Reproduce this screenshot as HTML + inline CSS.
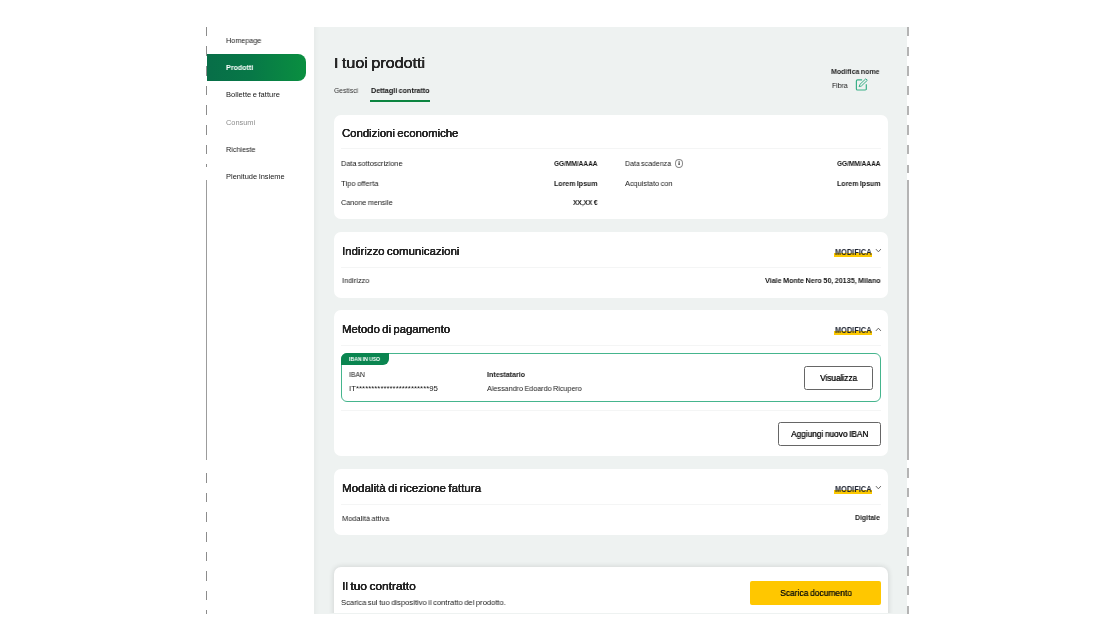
<!DOCTYPE html>
<html><head><meta charset="utf-8"><style>
*{margin:0;padding:0;box-sizing:border-box}
html,body{width:1113px;height:640px;overflow:hidden;background:#fff}
body{position:relative;font-family:"Liberation Sans",sans-serif;color:#2e2e2e}
.a{position:absolute;white-space:nowrap;will-change:transform}
.r{position:absolute}
.pill{left:207px;top:53.6px;width:99px;height:27.3px;border-radius:0 8px 8px 0;background:linear-gradient(90deg,#086e48 0%,#077847 45%,#0a8f40 100%)}
.panel{left:313.6px;top:27px;width:593.4px;height:586.5px;background:#eef2f1;box-shadow:inset 5px 0 4px -3px rgba(0,0,0,.035)}
.card{left:333.8px;width:554.2px;background:#fff;border-radius:7px}
.c5{border-radius:7px 7px 0 0;box-shadow:0 0 5px 1px rgba(0,0,0,.1)}
.hr{left:341px;width:540px;height:1px;background:#f4f5f5}
.btn{border:1px solid #666;border-radius:2.5px;background:#fff}
</style></head><body>
<div class="r" style="left:206px;top:26.5px;width:1.4px;height:9.8px;background:#8c8c8c"></div>
<div class="r" style="left:206px;top:46.2px;width:1.4px;height:9.8px;background:#8c8c8c"></div>
<div class="r" style="left:206px;top:65.9px;width:1.4px;height:9.8px;background:#8c8c8c"></div>
<div class="r" style="left:206px;top:85.6px;width:1.4px;height:9.8px;background:#8c8c8c"></div>
<div class="r" style="left:206px;top:105.3px;width:1.4px;height:9.8px;background:#8c8c8c"></div>
<div class="r" style="left:206px;top:125.0px;width:1.4px;height:9.8px;background:#8c8c8c"></div>
<div class="r" style="left:206px;top:144.7px;width:1.4px;height:9.8px;background:#8c8c8c"></div>
<div class="r" style="left:206px;top:164.4px;width:1.4px;height:3.1px;background:#8c8c8c"></div>
<div class="r" style="left:206px;top:180px;width:1.4px;height:280px;background:#9c9c9c"></div>
<div class="r" style="left:206px;top:473.3px;width:1.4px;height:9.6px;background:#8c8c8c"></div>
<div class="r" style="left:206px;top:492.9px;width:1.4px;height:9.6px;background:#8c8c8c"></div>
<div class="r" style="left:206px;top:512.4px;width:1.4px;height:9.6px;background:#8c8c8c"></div>
<div class="r" style="left:206px;top:532.0px;width:1.4px;height:9.6px;background:#8c8c8c"></div>
<div class="r" style="left:206px;top:551.5px;width:1.4px;height:9.6px;background:#8c8c8c"></div>
<div class="r" style="left:206px;top:571.0px;width:1.4px;height:9.6px;background:#8c8c8c"></div>
<div class="r" style="left:206px;top:590.6px;width:1.4px;height:9.6px;background:#8c8c8c"></div>
<div class="r" style="left:206px;top:610.1px;width:1.4px;height:4.1px;background:#8c8c8c"></div>
<div class="r" style="left:907px;top:27.0px;width:2px;height:9.4px;background:#b4b4b4"></div>
<div class="r" style="left:907px;top:46.6px;width:2px;height:9.4px;background:#b4b4b4"></div>
<div class="r" style="left:907px;top:66.3px;width:2px;height:9.4px;background:#b4b4b4"></div>
<div class="r" style="left:907px;top:85.9px;width:2px;height:9.4px;background:#b4b4b4"></div>
<div class="r" style="left:907px;top:105.6px;width:2px;height:9.4px;background:#b4b4b4"></div>
<div class="r" style="left:907px;top:125.2px;width:2px;height:9.4px;background:#b4b4b4"></div>
<div class="r" style="left:907px;top:144.9px;width:2px;height:9.4px;background:#b4b4b4"></div>
<div class="r" style="left:907px;top:164.5px;width:2px;height:8.3px;background:#b4b4b4"></div>
<div class="r" style="left:907px;top:180px;width:2px;height:280px;background:#b4b4b4"></div>
<div class="r" style="left:907px;top:468.4px;width:2px;height:9.4px;background:#b4b4b4"></div>
<div class="r" style="left:907px;top:488.0px;width:2px;height:9.4px;background:#b4b4b4"></div>
<div class="r" style="left:907px;top:507.6px;width:2px;height:9.4px;background:#b4b4b4"></div>
<div class="r" style="left:907px;top:527.2px;width:2px;height:9.4px;background:#b4b4b4"></div>
<div class="r" style="left:907px;top:546.8px;width:2px;height:9.4px;background:#b4b4b4"></div>
<div class="r" style="left:907px;top:566.4px;width:2px;height:9.4px;background:#b4b4b4"></div>
<div class="r" style="left:907px;top:586.0px;width:2px;height:9.4px;background:#b4b4b4"></div>
<div class="r" style="left:907px;top:605.6px;width:2px;height:8.2px;background:#b4b4b4"></div>
<div class="r pill"></div>
<div class="a" style="top:36px;font-size:7.4px;line-height:9px;color:#161616;word-spacing:-0.07em;left:226.00px;transform-origin:0 0;transform:scaleX(0.9779);">Homepage</div>
<div class="a" style="top:63px;font-size:7.4px;line-height:9px;color:#fff;word-spacing:-0.07em;font-weight:bold;left:226.00px;transform-origin:0 0;transform:scaleX(0.9660);">Prodotti</div>
<div class="a" style="top:90px;font-size:7.4px;line-height:9px;color:#161616;word-spacing:-0.07em;left:226.00px;transform-origin:0 0;transform:scaleX(1.0217);">Bollette e fatture</div>
<div class="a" style="top:118px;font-size:7.4px;line-height:9px;color:#8c8c8c;word-spacing:-0.07em;left:226.00px;transform-origin:0 0;transform:scaleX(0.9863);">Consumi</div>
<div class="a" style="top:145px;font-size:7.4px;line-height:9px;color:#161616;word-spacing:-0.07em;left:226.00px;transform-origin:0 0;transform:scaleX(0.9725);">Richieste</div>
<div class="a" style="top:172px;font-size:7.4px;line-height:9px;color:#161616;word-spacing:-0.07em;left:226.00px;transform-origin:0 0;transform:scaleX(1.0085);">Plenitude Insieme</div>
<div class="r panel"></div>
<div class="a" style="top:56px;font-size:13.8px;line-height:15px;color:#262626;word-spacing:-0.07em;text-shadow:0.18px 0 0 #262626,-0.11px 0 0 #262626,0 0.09px 0 #262626;left:334.10px;transform-origin:0 0;transform:scaleX(1.1715);">I tuoi prodotti</div>
<div class="a" style="top:86px;font-size:7.5px;line-height:9px;color:#333;word-spacing:-0.07em;left:333.70px;transform-origin:0 0;transform:scaleX(0.9036);">Gestisci</div>
<div class="a" style="top:86px;font-size:7.5px;line-height:9px;color:#111;word-spacing:-0.07em;font-weight:bold;left:370.70px;transform-origin:0 0;transform:scaleX(0.9519);">Dettagli contratto</div>
<div class="r" style="left:370px;top:100.4px;width:60px;height:2px;background:#0b8440"></div>
<div class="a" style="top:67px;font-size:7.7px;line-height:9px;color:#262626;word-spacing:-0.07em;font-weight:bold;left:831.45px;transform-origin:0 0;transform:scaleX(0.9097);">Modifica nome</div>
<div class="a" style="top:81px;font-size:7.9px;line-height:9px;color:#161616;word-spacing:-0.07em;left:831.50px;transform-origin:0 0;transform:scaleX(0.8720);">Fibra</div>
<svg class="r" style="left:852px;top:76px" width="18" height="18" viewBox="0 0 18 18"><path d="M10.1 3.8H5.5a1.1 1.1 0 0 0-1.1 1.1V12.9a1.1 1.1 0 0 0 1.1 1.1H13.2a1.1 1.1 0 0 0 1.1-1.1V8.3" fill="none" stroke="#3ab088" stroke-width="1.2"/><path d="M13.8 2.8L15.3 4.3 9.5 9.9 7.1 10.7 7.9 8.4Z" fill="none" stroke="#3ab088" stroke-width="1" stroke-linejoin="round"/></svg>
<div class="r card" style="top:115px;height:104px"></div>
<div class="a" style="top:127px;font-size:11px;line-height:12px;color:#262626;word-spacing:-0.07em;text-shadow:0.15px 0 0 #262626,-0.09px 0 0 #262626,0 0.07px 0 #262626;left:341.60px;transform-origin:0 0;transform:scaleX(1.0305);">Condizioni economiche</div>
<div class="r hr" style="top:148.3px"></div>
<div class="a" style="top:159px;font-size:7.8px;line-height:9px;color:#161616;word-spacing:-0.07em;left:341.30px;transform-origin:0 0;transform:scaleX(0.9349);">Data sottoscrizione</div>
<div class="a" style="top:179px;font-size:7.8px;line-height:9px;color:#161616;word-spacing:-0.07em;left:341.30px;transform-origin:0 0;transform:scaleX(0.9770);">Tipo offerta</div>
<div class="a" style="top:198px;font-size:7.8px;line-height:9px;color:#161616;word-spacing:-0.07em;left:341.30px;transform-origin:0 0;transform:scaleX(0.9261);">Canone mensile</div>
<div class="a" style="top:159px;font-size:7.5px;line-height:9px;color:#161616;word-spacing:-0.07em;font-weight:bold;left:553.70px;transform-origin:0 0;transform:scaleX(0.8701);">GG/MM/AAAA</div>
<div class="a" style="top:179px;font-size:7.5px;line-height:9px;color:#161616;word-spacing:-0.07em;font-weight:bold;left:553.70px;transform-origin:0 0;transform:scaleX(0.9341);">Lorem Ipsum</div>
<div class="a" style="top:198px;font-size:7.5px;line-height:9px;color:#161616;word-spacing:-0.07em;font-weight:bold;left:572.80px;transform-origin:0 0;transform:scaleX(0.8769);">XX,XX €</div>
<div class="a" style="top:159px;font-size:7.8px;line-height:9px;color:#161616;word-spacing:-0.07em;left:624.80px;transform-origin:0 0;transform:scaleX(0.8933);">Data scadenza</div>
<div class="r" style="left:675px;top:159.4px;width:8.1px;height:8.4px;border:0.85px solid #8c8c8c;border-radius:50%"></div>
<svg class="r" style="left:674px;top:158px" width="10" height="10" viewBox="0 0 10 10"><path d="M5.1 3.3V6.2" stroke="#444" stroke-width="0.9" stroke-linecap="round"/><circle cx="5.1" cy="6.3" r="0.7" fill="#333"/></svg>
<div class="a" style="top:179px;font-size:7.8px;line-height:9px;color:#161616;word-spacing:-0.07em;left:624.50px;transform-origin:0 0;transform:scaleX(0.9383);">Acquistato con</div>
<div class="a" style="top:159px;font-size:7.5px;line-height:9px;color:#161616;word-spacing:-0.07em;font-weight:bold;left:836.80px;transform-origin:0 0;transform:scaleX(0.8701);">GG/MM/AAAA</div>
<div class="a" style="top:179px;font-size:7.5px;line-height:9px;color:#161616;word-spacing:-0.07em;font-weight:bold;left:836.80px;transform-origin:0 0;transform:scaleX(0.9341);">Lorem Ipsum</div>
<div class="r card" style="top:232px;height:66px"></div>
<div class="a" style="top:245px;font-size:11px;line-height:12px;color:#262626;word-spacing:-0.07em;text-shadow:0.15px 0 0 #262626,-0.09px 0 0 #262626,0 0.07px 0 #262626;left:341.80px;transform-origin:0 0;transform:scaleX(1.0394);">Indirizzo comunicazioni</div>
<div class="r" style="left:834px;top:252.90px;width:38px;height:4px;background:#fcc800"></div>
<div class="a" style="top:247px;font-size:8.5px;line-height:10px;color:#1f2430;word-spacing:-0.07em;font-weight:bold;left:834.90px;transform-origin:0 0;transform:scaleX(0.8686);">MODIFICA</div>
<svg class="r" style="left:875px;top:247.90px" width="7" height="5" viewBox="0 0 7 5"><path d="M0.9 1.1L3.4 3.8 5.9 1.1" fill="none" stroke="#555" stroke-width="0.9"/></svg>
<div class="r hr" style="top:266.5px"></div>
<div class="a" style="top:276px;font-size:7.8px;line-height:9px;color:#161616;word-spacing:-0.07em;left:341.60px;transform-origin:0 0;transform:scaleX(0.9398);">Indirizzo</div>
<div class="a" style="top:276px;font-size:7.5px;line-height:9px;color:#161616;word-spacing:-0.07em;font-weight:bold;left:764.50px;transform-origin:0 0;transform:scaleX(0.9526);">Viale Monte Nero 50, 20135, Milano</div>
<div class="r card" style="top:310.3px;height:145.7px"></div>
<div class="a" style="top:323px;font-size:11px;line-height:12px;color:#262626;word-spacing:-0.07em;text-shadow:0.15px 0 0 #262626,-0.09px 0 0 #262626,0 0.07px 0 #262626;left:341.80px;transform-origin:0 0;transform:scaleX(1.0309);">Metodo di pagamento</div>
<div class="r" style="left:834px;top:331.10px;width:38px;height:4px;background:#fcc800"></div>
<div class="a" style="top:325px;font-size:8.5px;line-height:10px;color:#1f2430;word-spacing:-0.07em;font-weight:bold;left:834.90px;transform-origin:0 0;transform:scaleX(0.8686);">MODIFICA</div>
<svg class="r" style="left:875px;top:327.30px" width="7" height="5" viewBox="0 0 7 5"><path d="M0.9 3.9L3.4 1.2 5.9 3.9" fill="none" stroke="#555" stroke-width="0.9"/></svg>
<div class="r hr" style="top:344.7px"></div>
<div class="r" style="left:341px;top:353px;width:540px;height:49px;border:1px solid #45b58d;border-radius:6px"></div>
<div class="r" style="left:341px;top:353px;width:48px;height:11.8px;background:#0a8550;border-radius:6px 0 6px 0"></div>
<div class="a" style="top:356px;font-size:5.5px;line-height:6px;color:#fff;word-spacing:-0.07em;font-weight:bold;left:348.80px;transform-origin:0 0;transform:scaleX(0.9412);">IBAN IN USO</div>
<div class="a" style="top:370px;font-size:7.3px;line-height:9px;color:#161616;word-spacing:-0.07em;left:348.80px;transform-origin:0 0;transform:scaleX(0.9332);">IBAN</div>
<div class="a" style="top:384px;font-size:7.8px;line-height:9px;color:#161616;word-spacing:-0.07em;left:348.80px;transform-origin:0 0;transform:scaleX(1.0061);">IT************************95</div>
<div class="a" style="top:370px;font-size:7.3px;line-height:9px;color:#161616;word-spacing:-0.07em;font-weight:bold;left:486.90px;transform-origin:0 0;transform:scaleX(0.9683);">Intestatario</div>
<div class="a" style="top:384px;font-size:7.8px;line-height:9px;color:#161616;word-spacing:-0.07em;left:486.90px;transform-origin:0 0;transform:scaleX(0.9216);">Alessandro Edoardo Ricupero</div>
<div class="r btn" style="left:804px;top:366px;width:69px;height:24px"></div>
<div class="a" style="top:373px;font-size:8.8px;line-height:10px;color:#111;word-spacing:-0.07em;text-shadow:0.3px 0 0 #111;left:820.20px;transform-origin:0 0;transform:scaleX(0.9375);">Visualizza</div>
<div class="r hr" style="top:409.5px"></div>
<div class="r btn" style="left:778px;top:422px;width:103px;height:24px"></div>
<div class="a" style="top:429px;font-size:8.6px;line-height:10px;color:#111;word-spacing:-0.07em;text-shadow:0.3px 0 0 #111;left:790.80px;transform-origin:0 0;transform:scaleX(0.9609);">Aggiungi nuovo IBAN</div>
<div class="r card" style="top:469.3px;height:65.7px"></div>
<div class="a" style="top:482px;font-size:11px;line-height:12px;color:#262626;word-spacing:-0.07em;text-shadow:0.15px 0 0 #262626,-0.09px 0 0 #262626,0 0.07px 0 #262626;left:341.80px;transform-origin:0 0;transform:scaleX(1.0521);">Modalità di ricezione fattura</div>
<div class="r" style="left:834px;top:490.10px;width:38px;height:4px;background:#fcc800"></div>
<div class="a" style="top:484px;font-size:8.5px;line-height:10px;color:#1f2430;word-spacing:-0.07em;font-weight:bold;left:834.90px;transform-origin:0 0;transform:scaleX(0.8686);">MODIFICA</div>
<svg class="r" style="left:875px;top:485.10px" width="7" height="5" viewBox="0 0 7 5"><path d="M0.9 1.1L3.4 3.8 5.9 1.1" fill="none" stroke="#555" stroke-width="0.9"/></svg>
<div class="r hr" style="top:503.6px"></div>
<div class="a" style="top:514px;font-size:7.8px;line-height:9px;color:#161616;word-spacing:-0.07em;left:341.60px;transform-origin:0 0;transform:scaleX(0.9486);">Modalità attiva</div>
<div class="a" style="top:513px;font-size:7.5px;line-height:9px;color:#161616;word-spacing:-0.07em;font-weight:bold;left:855.10px;transform-origin:0 0;transform:scaleX(0.9192);">Digitale</div>
<div class="r" style="left:313.6px;top:545px;width:593.4px;height:68.4px;overflow:hidden"><div class="r c5" style="left:20.2px;top:21.7px;width:554.2px;height:60px;background:#fff"></div></div>
<div class="a" style="top:580px;font-size:11px;line-height:12px;color:#222;word-spacing:-0.07em;text-shadow:0.18px 0 0 #222,-0.11px 0 0 #222,0 0.09px 0 #222;left:341.80px;transform-origin:0 0;transform:scaleX(1.0826);">Il tuo contratto</div>
<div class="a" style="top:598px;font-size:7.8px;line-height:9px;color:#161616;word-spacing:-0.07em;left:341.20px;transform-origin:0 0;transform:scaleX(0.9723);">Scarica sul tuo dispositivo il contratto del prodotto.</div>
<div class="r" style="left:750.4px;top:581.1px;width:130.2px;height:23.75px;background:#ffc700;border-radius:2px"></div>
<div class="a" style="top:588px;font-size:8.9px;line-height:10px;color:#15150a;word-spacing:-0.07em;text-shadow:0.3px 0 0 #15150a;left:779.80px;transform-origin:0 0;transform:scaleX(0.9529);">Scarica documento</div>
</body></html>
